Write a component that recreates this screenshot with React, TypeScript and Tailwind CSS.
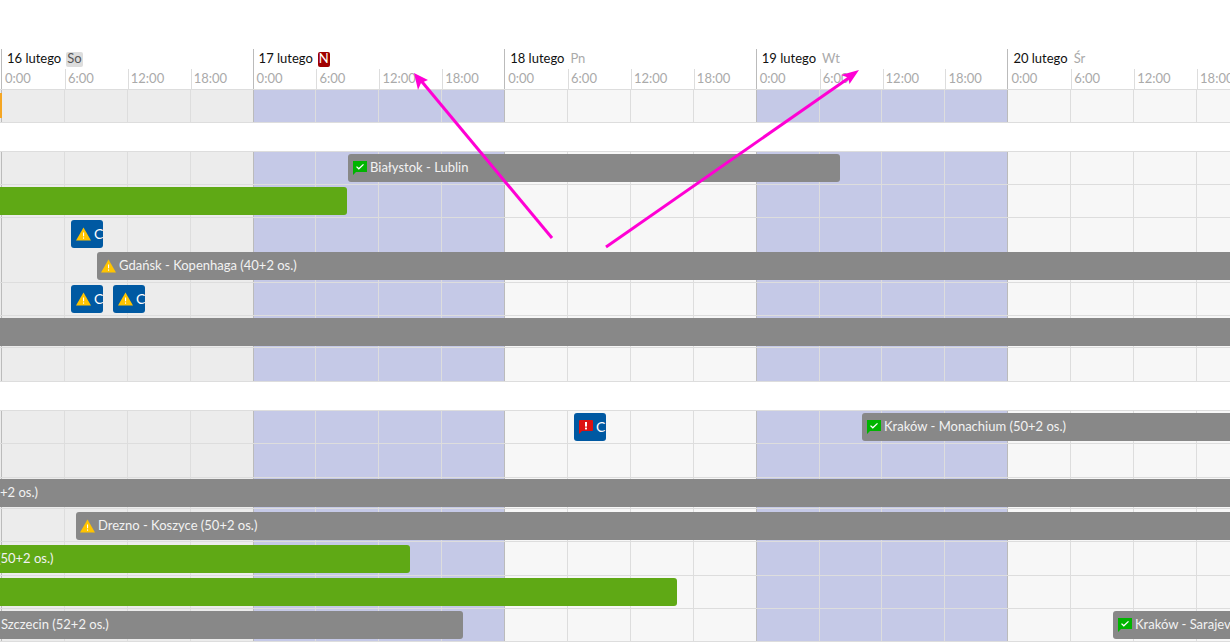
import React from 'react';

const days = [
  { date: '16 lutego', tag: 'So', tagClass: 'bg-[#dddddd] text-[#555555]', cell: 'bg-[#ececec]' },
  { date: '17 lutego', tag: 'N', tagClass: 'bg-[#a00000] text-white', cell: 'bg-[#c5c9e7]' },
  { date: '18 lutego', tag: 'Pn', tagClass: 'text-[#aaaaaa]', cell: 'bg-[#f7f7f7]' },
  { date: '19 lutego', tag: 'Wt', tagClass: 'text-[#aaaaaa]', cell: 'bg-[#c5c9e7]' },
  { date: '20 lutego', tag: 'Śr', tagClass: 'text-[#aaaaaa]', cell: 'bg-[#f7f7f7]' },
];

const hours = ['0:00', '6:00', '12:00', '18:00'];

const WarnIcon = () => (
  <svg width="15" height="14" viewBox="0 0 15 14" className="shrink-0">
    <path d="M7.5 0.5 L15 13.5 H0 Z" fill="#ffc400" />
    <rect x="7" y="5.5" width="1.1" height="3.8" fill="#fff" />
    <rect x="7" y="10.4" width="1.1" height="1.3" fill="#fff" />
  </svg>
);

const OkIcon = () => (
  <svg width="14" height="14" viewBox="0 0 14 14" className="shrink-0">
    <path d="M0 0 H14 V11 H3 L0 14 Z" fill="#00b400" />
    <path d="M3.5 5.6 L5.8 7.8 L10.5 3.4" fill="none" stroke="#fff" strokeWidth="1.3" />
  </svg>
);

const AlertIcon = () => (
  <svg width="14" height="14" viewBox="0 0 14 14" className="shrink-0">
    <path d="M1 0 H13 Q14 0 14 1 V10 Q14 11 13 11 H3 L0 14 V1 Q0 0 1 0 Z" fill="#dd1111" />
    <rect x="6" y="2" width="2" height="4.6" fill="#fff" />
    <rect x="6" y="7.6" width="2" height="1.8" fill="#fff" />
  </svg>
);

// a bar sits on the timeline, so left and top are its date and lane
const Bar = ({ className, icon, children }: { className: string; icon?: React.ReactNode; children?: React.ReactNode }) => (
  <div className={`absolute z-10 flex h-[28px] items-center gap-[3px] overflow-hidden whitespace-nowrap bg-[#888888] text-[13px] text-[#f2f2f2] ${className}`}>
    {icon}
    {children}
  </div>
);

const Badge = ({ className, icon }: { className: string; icon: React.ReactNode }) => (
  <div className={`absolute z-10 flex h-[28px] w-[32px] items-center gap-[3px] overflow-hidden rounded-[3px] bg-[#0059a2] pl-[5px] text-[14px] text-white ${className}`}>
    {icon}
    <span className="-mt-[2px]">C</span>
  </div>
);

const Row = ({ className, children }: { className: string; children?: React.ReactNode }) => (
  <div className={`relative flex overflow-hidden border-b border-[#dddddd] pl-[1px] ${className}`}>
    <div className="absolute left-0 top-0 h-full w-[1px] bg-[#ececec]" />
    {days.map((d) =>
      hours.map((h, i) => (
        <div
          key={d.date + h}
          className={`h-full w-[62.9px] shrink-0 border-l ${d.cell} ${i === 0 ? 'border-[#bbbbbb]' : 'border-[#dddddd]'}`}
        />
      ))
    )}
    {children}
  </div>
);

const Spacer = () => <div className="h-[29px] border-b border-[#dddddd] bg-white" />;

export default function App() {
  return (
    <div className="relative h-[642px] w-[1230px] overflow-hidden bg-white font-['Lato',sans-serif]">
      {/* Header */}
      <div className="flex border-b border-[#dddddd] pl-[1px] pt-[49px]">
        {days.map((d) => (
          <div key={d.date} className="w-[251.6px] shrink-0 border-l border-[#bbbbbb]">
            <div className="flex h-[20px] items-center gap-[5px] pl-[5px] text-[13px] text-[#111111]">
              <span>{d.date}</span>
              <span className={`flex h-[15px] items-center rounded-[2px] px-[1px] ${d.tagClass}`}>{d.tag}</span>
            </div>
            <div className="flex h-[20px]">
              {hours.map((h, i) => (
                <div key={h} className={`h-full w-[62.9px] shrink-0 text-[13px] leading-[18px] text-[#aaaaaa] ${i > 0 ? 'border-l border-[#dddddd] pl-[2px]' : 'pl-[3px]'}`}>
                  {h}
                </div>
              ))}
            </div>
          </div>
        ))}
      </div>

      <Row className="h-[33px]">
        <div className="absolute left-0 top-[3px] z-10 h-[25px] w-[2px] bg-[#f5a623]" />
      </Row>
      <Spacer />
      <Row className="h-[33px]">
        <Bar className="left-[348px] top-[2px] w-[492px] rounded-[3px] pl-[5px]" icon={<OkIcon />}>
          <span>Białystok - Lublin</span>
        </Bar>
      </Row>
      <Row className="h-[33px]">
        <Bar className="left-0 top-[2px] w-[347px] rounded-r-[3px] !bg-[#5fa915]" />
      </Row>
      <Row className="h-[65px]">
        <Badge className="left-[71px] top-[2px]" icon={<WarnIcon />} />
        <Bar className="left-[97px] top-[34px] w-[1140px] rounded-l-[3px] pl-[4px]" icon={<WarnIcon />}>
          <span>Gdańsk - Kopenhaga (40+2 os.)</span>
        </Bar>
      </Row>
      <Row className="h-[33px]">
        <Badge className="left-[71px] top-[2px]" icon={<WarnIcon />} />
        <Badge className="left-[113px] top-[2px]" icon={<WarnIcon />} />
      </Row>
      <Row className="h-[32px]">
        <Bar className="left-0 top-[2px] w-[1230px]" />
      </Row>
      <Row className="h-[34px]" />
      <Spacer />
      <Row className="h-[33px]">
        <Badge className="left-[574px] top-[2px]" icon={<AlertIcon />} />
        <Bar className="left-[862px] top-[2px] w-[380px] rounded-l-[3px] pl-[5px]" icon={<OkIcon />}>
          <span>Kraków - Monachium (50+2 os.)</span>
        </Bar>
      </Row>
      <Row className="h-[34px]" />
      <Row className="h-[31px]">
        <Bar className="left-0 top-[1px] w-[1230px]">
          <span>+2 os.)</span>
        </Bar>
      </Row>
      <Row className="h-[33px]">
        <Bar className="left-[76px] top-[3px] w-[1160px] rounded-l-[3px] pl-[4px]" icon={<WarnIcon />}>
          <span>Drezno - Koszyce (50+2 os.)</span>
        </Bar>
      </Row>
      <Row className="h-[34px]">
        <Bar className="left-0 top-[3px] w-[410px] rounded-r-[3px] !bg-[#5fa915]">
          <span className="-ml-[3px]">(50+2 os.)</span>
        </Bar>
      </Row>
      <Row className="h-[33px]">
        <Bar className="left-0 top-[2px] w-[677px] rounded-r-[3px] !bg-[#5fa915]" />
      </Row>
      <Row className="h-[33px]">
        <Bar className="left-0 top-[2px] w-[463px] rounded-r-[3px] pl-[1px]">
          <span>Szczecin (52+2 os.)</span>
        </Bar>
        <Bar className="left-[1113px] top-[2px] w-[130px] rounded-l-[3px] pl-[5px]" icon={<OkIcon />}>
          <span>Kraków - Sarajevo</span>
        </Bar>
      </Row>

      {/* Annotation arrows */}
      <svg className="absolute left-0 top-0 z-20" width="1230" height="642" fill="none">
        <path d="M552 238 L418 77" stroke="#ff00d4" strokeWidth="3" />
        <path d="M606 247 L853 75" stroke="#ff00d4" strokeWidth="3" />
        <path d="M414 73 L428 80 L421 83 L418 90 Z" fill="#ff00d4" />
        <path d="M859 70 L849.5 84 L848 77.5 L841 75 Z" fill="#ff00d4" />
      </svg>
    </div>
  );
}
